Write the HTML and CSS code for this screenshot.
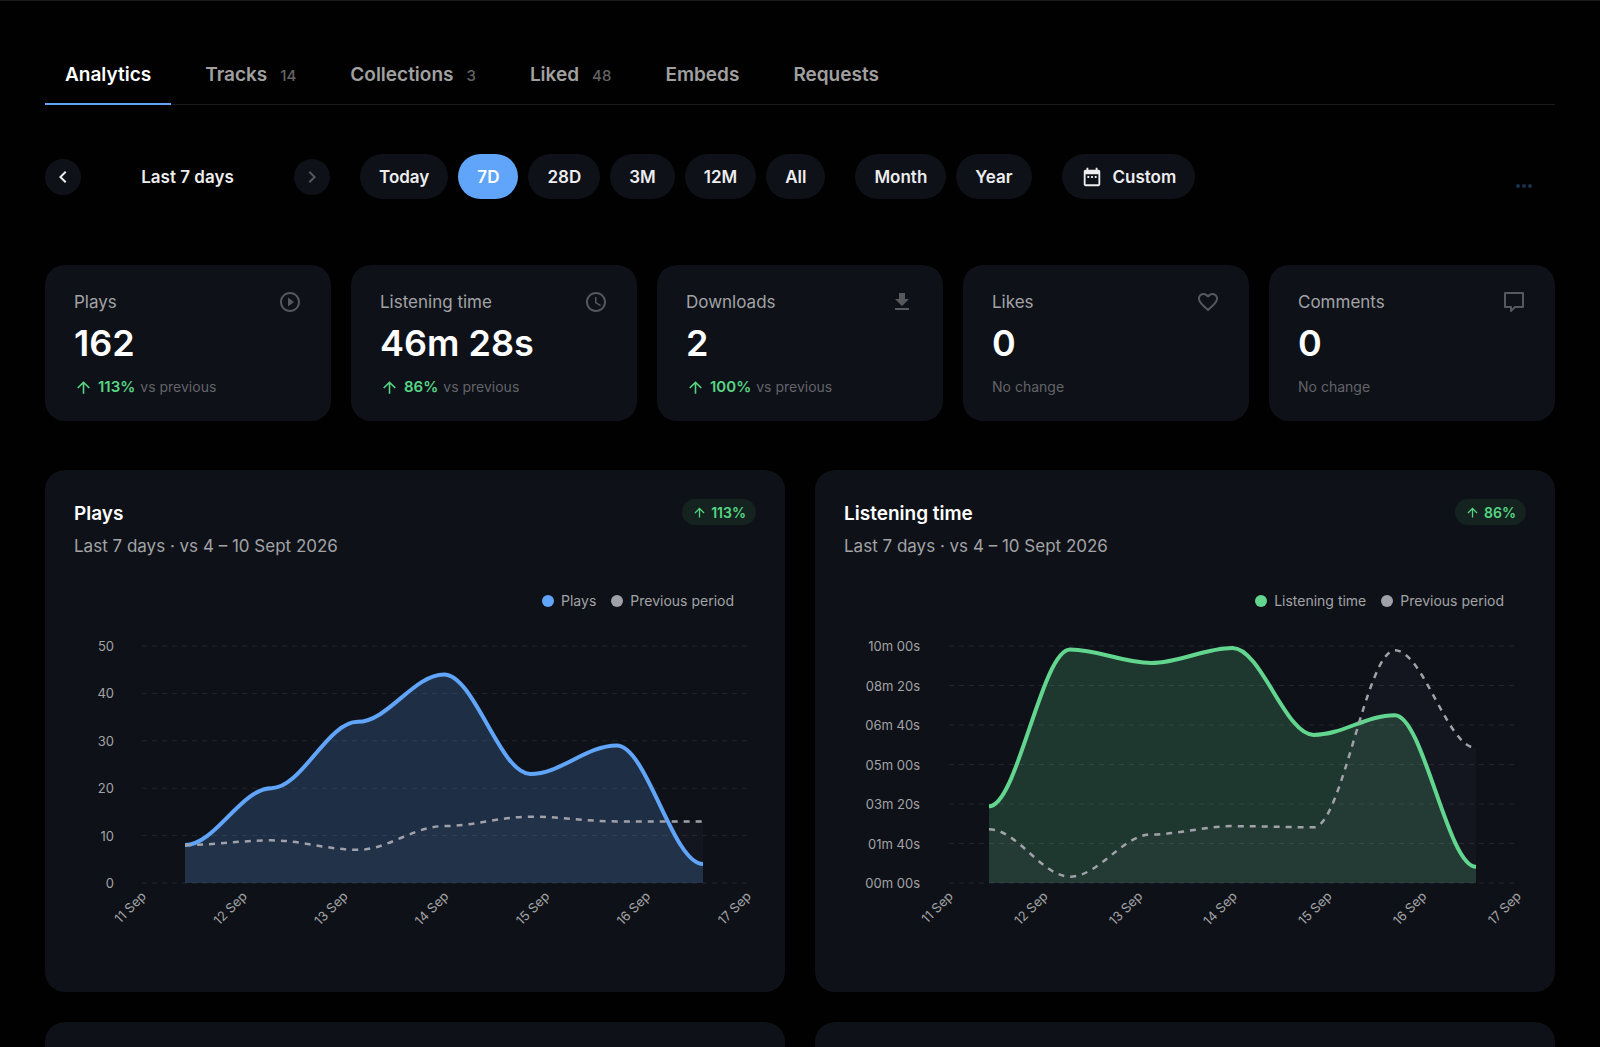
FILE: index.html
```html
<!DOCTYPE html>
<html lang="en">
<head>
    <meta charset="UTF-8">
    <meta name="viewport" content="width=device-width, initial-scale=1.0">
    <title>Analytics</title>
    <link rel="stylesheet" href="styles.css">
</head>
<body>
    <main class="page">
        <nav class="tabs">
            <a href="#" class="tab active">Analytics</a>
            <a href="#" class="tab">Tracks <span class="count">14</span></a>
            <a href="#" class="tab">Collections <span class="count">3</span></a>
            <a href="#" class="tab">Liked <span class="count">48</span></a>
            <a href="#" class="tab">Embeds</a>
            <a href="#" class="tab">Requests</a>
        </nav>

        <div class="toolbar">
            <div class="period">
                <button class="round" aria-label="Previous period">
                    <svg viewBox="0 0 24 24"><path d="M15.41 7.41 14 6l-6 6 6 6 1.41-1.41L10.83 12z"/></svg>
                </button>
                <span class="period-name">Last 7 days</span>
                <button class="round" aria-label="Next period" disabled>
                    <svg viewBox="0 0 24 24"><path d="M10 6 8.59 7.41 13.17 12l-4.58 4.59L10 18l6-6z"/></svg>
                </button>
            </div>
            <div class="pills">
                <button class="pill">Today</button>
                <button class="pill selected">7D</button>
                <button class="pill">28D</button>
                <button class="pill">3M</button>
                <button class="pill">12M</button>
                <button class="pill">All</button>
            </div>
            <div class="pills">
                <button class="pill">Month</button>
                <button class="pill">Year</button>
            </div>
            <button class="pill">
                <svg class="calendar" viewBox="0 0 24 24"><path d="M9 11H7v2h2zm4 0h-2v2h2zm4 0h-2v2h2zm2-7h-1V2h-2v2H8V2H6v2H5c-1.11 0-1.99.9-1.99 2L3 20c0 1.1.89 2 2 2h14c1.1 0 2-.9 2-2V6c0-1.1-.9-2-2-2m0 16H5V9h14z"/></svg>
                Custom
            </button>
            <div class="loading"><i></i><i></i><i></i></div>
        </div>

        <section class="stats">
            <div class="stat">
                <div class="stat-head">Plays
                    <svg viewBox="0 0 24 24"><path d="m10 16.5 6-4.5-6-4.5zM12 2C6.48 2 2 6.48 2 12s4.48 10 10 10 10-4.48 10-10S17.52 2 12 2m0 18c-4.41 0-8-3.59-8-8s3.59-8 8-8 8 3.59 8 8-3.59 8-8 8"/></svg>
                </div>
                <div class="value">162</div>
                <div class="change"><svg viewBox="0 0 24 24"><path d="m4 12 1.41 1.41L11 7.83V20h2V7.83l5.58 5.59L20 12l-8-8z"/></svg><b>113%</b> vs previous</div>
            </div>
            <div class="stat">
                <div class="stat-head">Listening time
                    <svg viewBox="0 0 24 24"><path d="M11.99 2C6.47 2 2 6.48 2 12s4.47 10 9.99 10C17.52 22 22 17.52 22 12S17.52 2 11.99 2M12 20c-4.42 0-8-3.58-8-8s3.58-8 8-8 8 3.58 8 8-3.58 8-8 8m.5-13H11v6l5.25 3.15.75-1.23-4.5-2.67z"/></svg>
                </div>
                <div class="value">46m 28s</div>
                <div class="change"><svg viewBox="0 0 24 24"><path d="m4 12 1.41 1.41L11 7.83V20h2V7.83l5.58 5.59L20 12l-8-8z"/></svg><b>86%</b> vs previous</div>
            </div>
            <div class="stat">
                <div class="stat-head">Downloads
                    <svg viewBox="0 0 24 24"><path d="M19 9h-4V3H9v6H5l7 7zM5 18v2h14v-2z"/></svg>
                </div>
                <div class="value">2</div>
                <div class="change"><svg viewBox="0 0 24 24"><path d="m4 12 1.41 1.41L11 7.83V20h2V7.83l5.58 5.59L20 12l-8-8z"/></svg><b>100%</b> vs previous</div>
            </div>
            <div class="stat">
                <div class="stat-head">Likes
                    <svg viewBox="0 0 24 24"><path d="M16.5 3c-1.74 0-3.41.81-4.5 2.09C10.91 3.81 9.24 3 7.5 3 4.42 3 2 5.42 2 8.5c0 3.78 3.4 6.86 8.55 11.54L12 21.35l1.45-1.32C18.6 15.36 22 12.28 22 8.5 22 5.42 19.58 3 16.5 3m-4.4 15.55-.1.1-.1-.1C7.14 14.24 4 11.39 4 8.5 4 6.5 5.5 5 7.5 5c1.54 0 3.04.99 3.57 2.36h1.87C13.46 5.99 14.96 5 16.5 5c2 0 3.5 1.5 3.5 3.5 0 2.89-3.14 5.74-7.9 10.05"/></svg>
                </div>
                <div class="value">0</div>
                <div class="change">No change</div>
            </div>
            <div class="stat">
                <div class="stat-head">Comments
                    <svg viewBox="0 0 24 24"><path fill="none" stroke="currentColor" stroke-width="2" stroke-linejoin="round" d="M3 3h18v14h-8l-4 4v-4H3z"/></svg>
                </div>
                <div class="value">0</div>
                <div class="change">No change</div>
            </div>
        </section>

        <section class="charts">
            <div class="card">
                <div class="card-head">
                    <h2>Plays</h2>
                    <span class="badge"><svg viewBox="0 0 24 24"><path d="m4 12 1.41 1.41L11 7.83V20h2V7.83l5.58 5.59L20 12l-8-8z"/></svg>113%</span>
                </div>
                <p class="subtitle">Last 7 days · vs 4 – 10 Sept 2026</p>
                <div class="legend">
                    <span class="key blue">Plays</span>
                    <span class="key">Previous period</span>
                </div>
                <svg class="chart blue" id="playsChart" viewBox="0 0 682 341"></svg>
            </div>
            <div class="card">
                <div class="card-head">
                    <h2>Listening time</h2>
                    <span class="badge"><svg viewBox="0 0 24 24"><path d="m4 12 1.41 1.41L11 7.83V20h2V7.83l5.58 5.59L20 12l-8-8z"/></svg>86%</span>
                </div>
                <p class="subtitle">Last 7 days · vs 4 – 10 Sept 2026</p>
                <div class="legend">
                    <span class="key green">Listening time</span>
                    <span class="key">Previous period</span>
                </div>
                <svg class="chart green" id="timeChart" viewBox="0 0 682 341"></svg>
            </div>
            <div class="card"></div>
            <div class="card"></div>
        </section>
    </main>

    <script>
        const TOP = 24;
        const BOTTOM = 261;
        const days = ['11 Sep', '12 Sep', '13 Sep', '14 Sep', '15 Sep', '16 Sep', '17 Sep'];

        // smooth line through the values, flat at every point
        function linePath(values, opt) {
            const step = (opt.lastX - opt.firstX) / (values.length - 1);
            const y = v => BOTTOM - v / opt.max * (BOTTOM - TOP);
            let d = `M${opt.firstX} ${y(values[0])}`;
            for (let i = 1; i < values.length; i++) {
                const x = opt.firstX + i * step;
                d += `C${x - step * 0.65} ${y(values[i - 1])} ${x - step * 0.35} ${y(values[i])} ${x} ${y(values[i])}`;
            }
            return d;
        }

        function drawChart(id, opt) {
            let out = '';
            const rows = opt.labels.length - 1;

            // grid and y axis
            opt.labels.forEach((label, i) => {
                const y = BOTTOM - i / rows * (BOTTOM - TOP);
                out += `<line class="grid" x1="${opt.gridLeft}" x2="673" y1="${y}" y2="${y}"/>`;
                out += `<text class="y-label" x="${opt.labelRight}" y="${y + 5}">${label}</text>`;
            });

            // x axis
            days.forEach((day, i) => {
                const x = opt.gridLeft + 5 + i * (673 - opt.gridLeft) / 6;
                out += `<text class="x-label" transform="translate(${x} 275) rotate(-45)">${day}</text>`;
            });

            const close = `L${opt.lastX} ${BOTTOM}L${opt.firstX} ${BOTTOM}Z`;
            const current = linePath(opt.current, opt);
            const previous = linePath(opt.previous, opt);
            out += `<path class="area" d="${current}${close}"/>`;
            out += `<path class="area-previous" d="${previous}${close}"/>`;
            out += `<path class="line" d="${current}"/>`;
            out += `<path class="line-previous" d="${previous}"/>`;
            document.getElementById(id).innerHTML = out;
        }

        drawChart('playsChart', {
            max: 50,
            labels: ['0', '10', '20', '30', '40', '50'],
            labelRight: 40,
            gridLeft: 68,
            firstX: 111,
            lastX: 629,
            current: [8, 20, 34, 44, 23, 29, 4],
            previous: [8, 9, 7, 12, 14, 13, 13]
        });

        // seconds
        drawChart('timeChart', {
            max: 600,
            labels: ['00m 00s', '01m 40s', '03m 20s', '05m 00s', '06m 40s', '08m 20s', '10m 00s'],
            labelRight: 76,
            gridLeft: 105,
            firstX: 145,
            lastX: 632,
            current: [194, 591, 557, 595, 375, 425, 41],
            previous: [136, 16, 123, 144, 141, 589, 342]
        });
    </script>
</body>
</html>
```

FILE: styles.css
```css
* {
    box-sizing: border-box;
}
body {
    margin: 0;
    background-color: #010101;
    color: #fff;
    font-family: Inter, "Liberation Sans", sans-serif;
    overflow-x: hidden;
}
svg {
    display: block;
    fill: currentColor;
}
.page {
    height: 100vh;
    overflow: hidden;
    border-top: 1px solid #1c1c1d;
    padding: 44px 45px 0;
}

/* tabs */
.tabs {
    display: flex;
    gap: 14px;
    border-bottom: 1px solid #1b1b1c;
}
.tab {
    display: flex;
    align-items: baseline;
    gap: 13px;
    padding: 18px 20px 15px;
    margin-bottom: -1px;
    border-bottom: 2px solid transparent;
    color: #a0a0a0;
    font-size: 19px;
    font-weight: 600;
    line-height: 24px;
    text-decoration: none;
}
.tab.active {
    color: #fff;
    border-color: #60a5fa;
}
.count {
    color: #636363;
    font-size: 15px;
    font-weight: 500;
}

/* toolbar */
.toolbar {
    display: flex;
    align-items: center;
    gap: 30px;
    margin-top: 49px;
}
.period {
    display: flex;
    align-items: center;
    justify-content: space-between;
    width: 285px;
}
.period-name {
    color: #ededed;
    font-size: 17px;
    font-weight: 600;
}
button {
    border: none;
    background-color: #0e1118;
    color: #ededef;
    font-family: inherit;
    cursor: pointer;
}
.round {
    display: flex;
    align-items: center;
    justify-content: center;
    width: 36px;
    height: 36px;
    padding: 0;
    border-radius: 50%;
}
.round svg {
    width: 24px;
    height: 24px;
}
.round:disabled {
    color: #55575c;
    cursor: default;
}
.pills {
    display: flex;
    gap: 10px;
}
.pill {
    display: flex;
    align-items: center;
    gap: 10px;
    height: 45px;
    padding: 0 19px;
    border-radius: 23px;
    font-size: 17px;
    font-weight: 600;
}
.pill.selected {
    background-color: #60a5fa;
    color: #fff;
}
.calendar {
    width: 22px;
    height: 22px;
}
.loading {
    display: flex;
    gap: 2px;
    margin: 18px 23px 0 auto;
}
.loading i {
    width: 4px;
    height: 4px;
    border-radius: 50%;
    background-color: #16324c;
}

/* numbers */
.stats {
    display: grid;
    grid-template-columns: repeat(5, 1fr);
    gap: 20px;
    margin-top: 66px;
}
.stat {
    height: 156px;
    padding: 24px 29px;
    border-radius: 20px;
    background-color: #0e1118;
}
.stat-head {
    display: flex;
    align-items: center;
    justify-content: space-between;
    color: #a2a3a5;
    font-size: 17px;
    line-height: 26px;
}
.stat-head svg {
    width: 24px;
    height: 24px;
    color: #56585d;
}
.value {
    margin-top: 5px;
    font-size: 36px;
    font-weight: 600;
    line-height: 46px;
}
.change {
    display: flex;
    align-items: center;
    gap: 5px;
    margin-top: 10px;
    color: #626468;
    font-size: 14px;
    line-height: 22px;
}
.change svg {
    width: 19px;
    height: 19px;
    color: #56d683;
}
.change b {
    color: #56d683;
    font-size: 15px;
    font-weight: 600;
}

/* charts */
.charts {
    display: grid;
    grid-template-columns: 1fr 1fr;
    gap: 30px;
    margin-top: 49px;
}
.card {
    min-height: 522px;
    padding: 29px;
    border-radius: 20px;
    background-color: #0e1118;
}
.card-head {
    display: flex;
    align-items: flex-start;
    justify-content: space-between;
    height: 32px;
}
h2 {
    margin: 0;
    font-size: 19px;
    font-weight: 600;
    line-height: 30px;
}
.badge {
    display: flex;
    align-items: center;
    gap: 4px;
    height: 26px;
    padding: 0 10px;
    border-radius: 13px;
    background-color: #14231f;
    color: #56d683;
    font-size: 14px;
    font-weight: 600;
}
.badge svg {
    width: 15px;
    height: 15px;
}
.subtitle {
    margin: 2px 0 0;
    color: #a2a3a5;
    font-size: 17px;
    line-height: 26px;
}
.legend {
    display: flex;
    justify-content: flex-end;
    gap: 15px;
    margin-top: 32px;
    padding-right: 22px;
    font-size: 14px;
    line-height: 20px;
}
.key {
    display: flex;
    align-items: center;
    gap: 7px;
    color: #a2a3a5;
}
.key::before {
    content: "";
    width: 12px;
    height: 12px;
    border-radius: 50%;
    background-color: #a1a1aa;
}
.key.blue::before {
    background-color: #60a5fa;
}
.key.green::before {
    background-color: #62d68e;
}
.chart {
    width: 100%;
    margin-top: 11px;
}
.chart.blue {
    color: #60a5fa;
}
.chart.green {
    color: #62d68e;
}
.grid {
    stroke: #23262c;
    stroke-dasharray: 5 5;
}
.y-label,
.x-label {
    fill: #a2a3a5;
    font-size: 13px;
    text-anchor: end;
}
.area {
    fill: currentColor;
    fill-opacity: 0.2;
}
.area-previous {
    fill: #a1a1aa;
    fill-opacity: 0.04;
}
.line {
    fill: none;
    stroke: currentColor;
    stroke-width: 4;
}
.line-previous {
    fill: none;
    stroke: #a1a1aa;
    stroke-width: 2.5;
    stroke-dasharray: 6 6;
}
```
